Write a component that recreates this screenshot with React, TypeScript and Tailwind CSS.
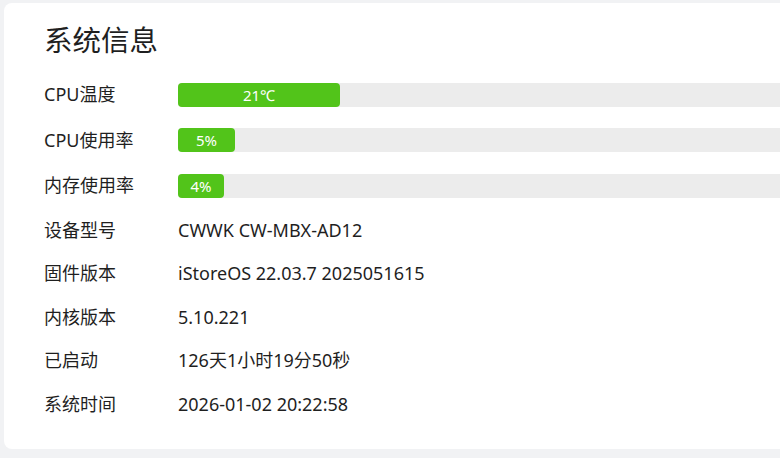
const bars = [
  { label: "CPU温度", text: "21℃", width: 162 },
  { label: "CPU使用率", text: "5%", width: 57 },
  { label: "内存使用率", text: "4%", width: 46 },
];

const rows = [
  { label: "设备型号", value: "CWWK CW-MBX-AD12" },
  { label: "固件版本", value: "iStoreOS 22.03.7 2025051615" },
  { label: "内核版本", value: "5.10.221" },
  { label: "已启动", value: "126天1小时19分50秒" },
  { label: "系统时间", value: "2026-01-02 20:22:58" },
];

export default function App() {
  return (
    <div
      className="h-[458px] w-[780px] overflow-hidden bg-[#f1f2f4] pl-[4px] pt-[3px] text-[#1f1f1f]"
      style={{ fontFamily: '"Noto Sans", "Noto Sans CJK SC", sans-serif' }}
    >
      <div className="h-[446px] w-[1000px] rounded-lg bg-white pl-[40px] pt-[17px]">
        <h2 className="h-[52px] text-[28.5px] leading-[40px] font-normal">系统信息</h2>
        <div className="flex flex-col">
          {bars.map((b) => (
            <div key={b.label} className="flex h-[45.5px] items-center">
              <div className="w-[134px] text-[18px]">{b.label}</div>
              <div className="h-[24px] flex-1 rounded bg-[#ececec]">
                <div
                  className="flex h-full items-center justify-center rounded bg-[#52c41a] text-[15px] text-white"
                  style={{ width: b.width }}
                >
                  {b.text}
                </div>
              </div>
            </div>
          ))}
          {rows.map((r) => (
            <div key={r.label} className="flex h-[43.5px] items-center">
              <div className="w-[134px] text-[18px]">{r.label}</div>
              <div className="text-[18px]">{r.value}</div>
            </div>
          ))}
        </div>
      </div>
    </div>
  );
}
